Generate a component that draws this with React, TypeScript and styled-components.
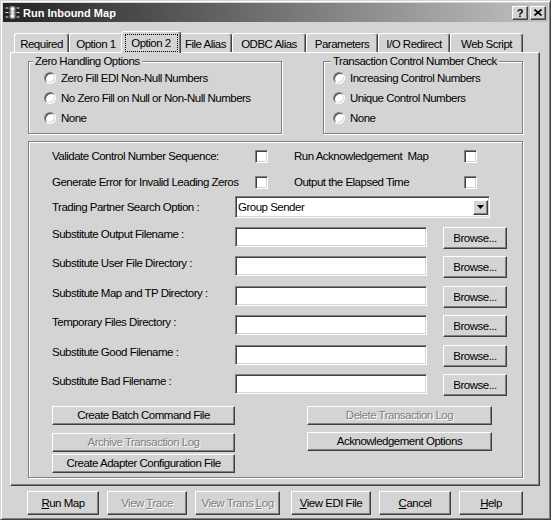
import React from 'react';
import styled, { createGlobalStyle, css } from 'styled-components';

const FACE = '#d4d4d4';

const GlobalStyle = createGlobalStyle`
  html, body {
    margin: 0;
    padding: 0;
    background: #fff;
  }
  body {
    font-family: "Liberation Sans", Arial, sans-serif;
    font-size: 11.5px;
    letter-spacing: -0.5px;
    color: #000;
  }
  * {
    box-sizing: border-box;
  }
`;

const raised = css`
  border: 1px solid;
  border-color: #fff #404040 #404040 #fff;
  box-shadow: inset -1px -1px 0 #808080;
`;

const sunken = css`
  border: 1px solid;
  border-color: #808080 #fff #fff #808080;
  box-shadow: inset 1px 1px 0 #404040, inset -1px -1px 0 ${FACE};
`;

const etched = css`
  border: 1px solid #808080;
  box-shadow: inset 1px 1px 0 #fff, 1px 1px 0 #fff;
`;

const Window = styled.div`
  width: 551px;
  height: 520px;
  background: ${FACE};
  border: 1px solid;
  border-color: ${FACE} #404040 #404040 ${FACE};
  box-shadow: inset 1px 1px 0 #fff, inset -1px -1px 0 #808080;
  padding: 2px;
  display: flex;
  flex-direction: column;
`;

const TitleBar = styled.div`
  height: 19px;
  display: flex;
  align-items: center;
  padding: 0 2px;
  background: linear-gradient(to right, #242424, #c2c2c2);
`;

const TitleText = styled.span`
  flex: 1;
  margin-left: 3px;
  color: #fff;
  font-weight: bold;
  font-size: 11px;
  letter-spacing: 0;
`;

const CaptionButton = styled.button`
  width: 16px;
  height: 14px;
  padding: 0;
  margin: 0;
  background: ${FACE};
  ${raised}
  display: flex;
  align-items: center;
  justify-content: center;
  font-family: "Liberation Sans", Arial, sans-serif;
  font-weight: bold;
  font-size: 11px;
  letter-spacing: 0;
  color: #000;

  & + & {
    margin-left: 2px;
  }
`;

const Body = styled.div`
  flex: 1;
  display: flex;
  flex-direction: column;
  padding: 9px 8px 0 7px;
`;

const TabStrip = styled.div`
  display: flex;
  align-items: flex-end;
  height: 21px;
  padding-left: 4px;
`;

const Tab = styled.div<{ $w: number; $active?: boolean }>`
  width: ${p => p.$w}px;
  height: 19px;
  flex: none;
  background: ${FACE};
  border-top: 1px solid #fff;
  border-left: 1px solid #fff;
  border-right: 1px solid #404040;
  box-shadow: inset -1px 0 0 #808080;
  border-radius: 3px 3px 0 0;
  display: flex;
  align-items: center;
  justify-content: center;
  padding-top: 2px;
  white-space: nowrap;

  ${p =>
    p.$active &&
    css`
      width: ${p.$w + 4}px;
      height: 22px;
      margin: 0 -2px -1px;
      position: relative;
      z-index: 1;
      padding-top: 0;
    `}
`;

const FocusLabel = styled.span`
  width: calc(100% - 5px);
  height: 18px;
  border: 1px dotted #000;
  display: flex;
  align-items: center;
  justify-content: center;
`;

const Panel = styled.div`
  height: 434px;
  flex: none;
  ${raised}
  padding: 1px 16px 0 17px;
  display: flex;
  flex-direction: column;
`;

const GroupRow = styled.div`
  display: flex;
  justify-content: space-between;
`;

const Group = styled.fieldset<{ $w: number }>`
  width: ${p => p.$w}px;
  min-width: 0;
  margin: 0;
  padding: 0 0 5px 0;
  ${etched}
`;

const Legend = styled.legend<{ $indent: number }>`
  margin-left: ${p => p.$indent}px;
  padding: 0 2px;
  line-height: 14px;
  background: ${FACE};
  position: relative;
`;

const RadioList = styled.div<{ $pad: number }>`
  display: flex;
  flex-direction: column;
  padding-left: ${p => p.$pad}px;
`;

const RadioRow = styled.label`
  display: flex;
  align-items: center;
  gap: 5px;
  height: 20px;
`;

const Radio = styled.span`
  width: 12px;
  height: 12px;
  border-radius: 50%;
  background: #fff;
  border: 1px solid;
  border-color: #808080 #fff #fff #808080;
  box-shadow: inset 1px 1px 0 #404040, inset -1px -1px 0 ${FACE};
`;

const Frame = styled.div`
  margin-top: 7px;
  ${etched}
  padding: 4px 0 4px 23px;
  display: flex;
  flex-direction: column;
`;

const CheckGrid = styled.div`
  display: grid;
  grid-template-columns: 203px 39px 170px 13px;
  grid-auto-rows: 20px;
  row-gap: 6px;
  align-items: center;
`;

const Label = styled.span`
  line-height: 14px;
  white-space: pre;
`;

const CheckBox = styled.span`
  display: block;
  width: 13px;
  height: 13px;
  background: #fff;
  ${sunken}
`;

const SelectRow = styled.div`
  display: grid;
  grid-template-columns: 183px 255px;
  align-items: center;
  margin-top: 4px;
`;

const Combo = styled.div`
  height: 22px;
  background: #fff;
  ${sunken}
  display: flex;
  align-items: center;
  padding: 0 1px 0 2px;
`;

const ComboText = styled.span`
  flex: 1;
`;

const ComboButton = styled.span`
  width: 15px;
  height: 15px;
  background: ${FACE};
  ${raised}
  display: flex;
  align-items: center;
  justify-content: center;
`;

const FileGrid = styled.div`
  display: grid;
  grid-template-columns: 183px 208px 64px;
  grid-auto-rows: 22px;
  row-gap: 7.4px;
  align-items: start;
  margin-top: 9px;
`;

const TextField = styled.input`
  width: 192px;
  height: 20px;
  background: #fff;
  ${sunken}
  padding: 0 2px;
  font: inherit;
  outline: none;
`;

const Button = styled.button<{ $w?: number; $h?: number; $mt?: number; $ml?: number }>`
  width: ${p => (p.$w ? `${p.$w}px` : '100%')};
  height: ${p => p.$h ?? 22}px;
  margin: ${p => p.$mt ?? 0}px 0 0 ${p => p.$ml ?? 0}px;
  padding: 0;
  flex: none;
  background: ${FACE};
  ${raised}
  font: inherit;
  letter-spacing: inherit;
  color: #000;

  &:disabled {
    color: #808080;
    text-shadow: 1px 1px 0 #fff;
  }
`;

const ActionGrid = styled.div`
  display: grid;
  grid-template-columns: 183px 185px;
  column-gap: 72px;
  margin-top: 10px;
`;

const ActionColumn = styled.div`
  display: flex;
  flex-direction: column;
`;

const Footer = styled.div`
  display: flex;
  gap: 8px;
  padding: 5px 0 0 17px;
`;

const tabs = [
  { label: 'Required', w: 55 },
  { label: 'Option 1', w: 54 },
  { label: 'Option 2', w: 56, active: true },
  { label: 'File Alias', w: 53 },
  { label: 'ODBC Alias', w: 74 },
  { label: 'Parameters', w: 72 },
  { label: 'I/O Redirect', w: 72 },
  { label: 'Web Script', w: 73 },
];

const fileRows = [
  'Substitute Output Filename :',
  'Substitute User File Directory :',
  'Substitute Map and TP Directory :',
  'Temporary Files Directory :',
  'Substitute Good Filename :',
  'Substitute Bad Filename :',
];

function AppIcon() {
  return (
    <svg width="15" height="15" viewBox="0 0 15 15">
      <rect x="4.5" y="1" width="6" height="13" rx="2" fill="#8a8a8a" />
      <circle cx="7.5" cy="4" r="1.8" fill="#fff" />
      <circle cx="7.5" cy="7.5" r="1.8" fill="#e0e0e0" />
      <circle cx="7.5" cy="11" r="1.8" fill="#fff" />
      <g stroke="#e8e8e8" strokeWidth="1">
        <line x1="0.5" y1="3" x2="3.5" y2="3" />
        <line x1="0.5" y1="7.5" x2="3.5" y2="7.5" />
        <line x1="0.5" y1="12" x2="3.5" y2="12" />
        <line x1="11.5" y1="3" x2="14.5" y2="3" />
        <line x1="11.5" y1="7.5" x2="14.5" y2="7.5" />
        <line x1="11.5" y1="12" x2="14.5" y2="12" />
      </g>
    </svg>
  );
}

function CloseGlyph() {
  return (
    <svg width="8" height="7" viewBox="0 0 8 7">
      <path d="M0.5 0.5 L7.5 6.5 M7.5 0.5 L0.5 6.5" stroke="#000" strokeWidth="1.6" />
    </svg>
  );
}

function ArrowGlyph() {
  return (
    <svg width="7" height="4" viewBox="0 0 7 4">
      <path d="M0 0 H7 L3.5 4 Z" fill="#000" />
    </svg>
  );
}

export default function App() {
  return (
    <>
      <GlobalStyle />
      <Window>
        <TitleBar>
          <AppIcon />
          <TitleText>Run Inbound Map</TitleText>
          <CaptionButton>?</CaptionButton>
          <CaptionButton>
            <CloseGlyph />
          </CaptionButton>
        </TitleBar>

        <Body>
          <TabStrip>
            {tabs.map(t => (
              <Tab key={t.label} $w={t.w} $active={t.active}>
                {t.active ? <FocusLabel>{t.label}</FocusLabel> : t.label}
              </Tab>
            ))}
          </TabStrip>

          <Panel>
            <GroupRow>
              <Group $w={254}>
                <Legend $indent={4}>Zero Handling Options</Legend>
                <RadioList $pad={15}>
                  <RadioRow><Radio />Zero Fill EDI Non-Null Numbers</RadioRow>
                  <RadioRow><Radio />No Zero Fill on Null or Non-Null Numbers</RadioRow>
                  <RadioRow><Radio />None</RadioRow>
                </RadioList>
              </Group>
              <Group $w={200}>
                <Legend $indent={7}>Transaction Control Number Check</Legend>
                <RadioList $pad={9}>
                  <RadioRow><Radio />Increasing Control Numbers</RadioRow>
                  <RadioRow><Radio />Unique Control Numbers</RadioRow>
                  <RadioRow><Radio />None</RadioRow>
                </RadioList>
              </Group>
            </GroupRow>

            <Frame>
              <CheckGrid>
                <Label>Validate Control Number Sequence:</Label>
                <CheckBox />
                <Label>Run Acknowledgement  Map</Label>
                <CheckBox />
                <Label>Generate Error for Invalid Leading Zeros</Label>
                <CheckBox />
                <Label>Output the Elapsed Time</Label>
                <CheckBox />
              </CheckGrid>

              <SelectRow>
                <Label>Trading Partner Search Option :</Label>
                <Combo>
                  <ComboText>Group Sender</ComboText>
                  <ComboButton>
                    <ArrowGlyph />
                  </ComboButton>
                </Combo>
              </SelectRow>

              <FileGrid>
                {fileRows.map(label => (
                  <React.Fragment key={label}>
                    <Label>{label}</Label>
                    <TextField />
                    <Button $w={64}>Browse...</Button>
                  </React.Fragment>
                ))}
              </FileGrid>

              <ActionGrid>
                <ActionColumn>
                  <Button $h={19}>Create Batch Command File</Button>
                  <Button $h={19} $mt={8} disabled>Archive Transaction Log</Button>
                  <Button $h={19} $mt={2}>Create Adapter Configuration File</Button>
                </ActionColumn>
                <ActionColumn>
                  <Button $h={19} disabled>Delete Transaction Log</Button>
                  <Button $h={19} $mt={7}>Acknowledgement Options</Button>
                </ActionColumn>
              </ActionGrid>
            </Frame>
          </Panel>

          <Footer>
            <Button $w={72} $h={24}><u>R</u>un Map</Button>
            <Button $w={80} $h={24} disabled>View <u>T</u>race</Button>
            <Button $w={85} $h={24} disabled>View Trans <u>L</u>og</Button>
            <Button $w={80} $h={24} $ml={3}><u>V</u>iew EDI File</Button>
            <Button $w={72} $h={24}><u>C</u>ancel</Button>
            <Button $w={64} $h={24}><u>H</u>elp</Button>
          </Footer>
        </Body>
      </Window>
    </>
  );
}
